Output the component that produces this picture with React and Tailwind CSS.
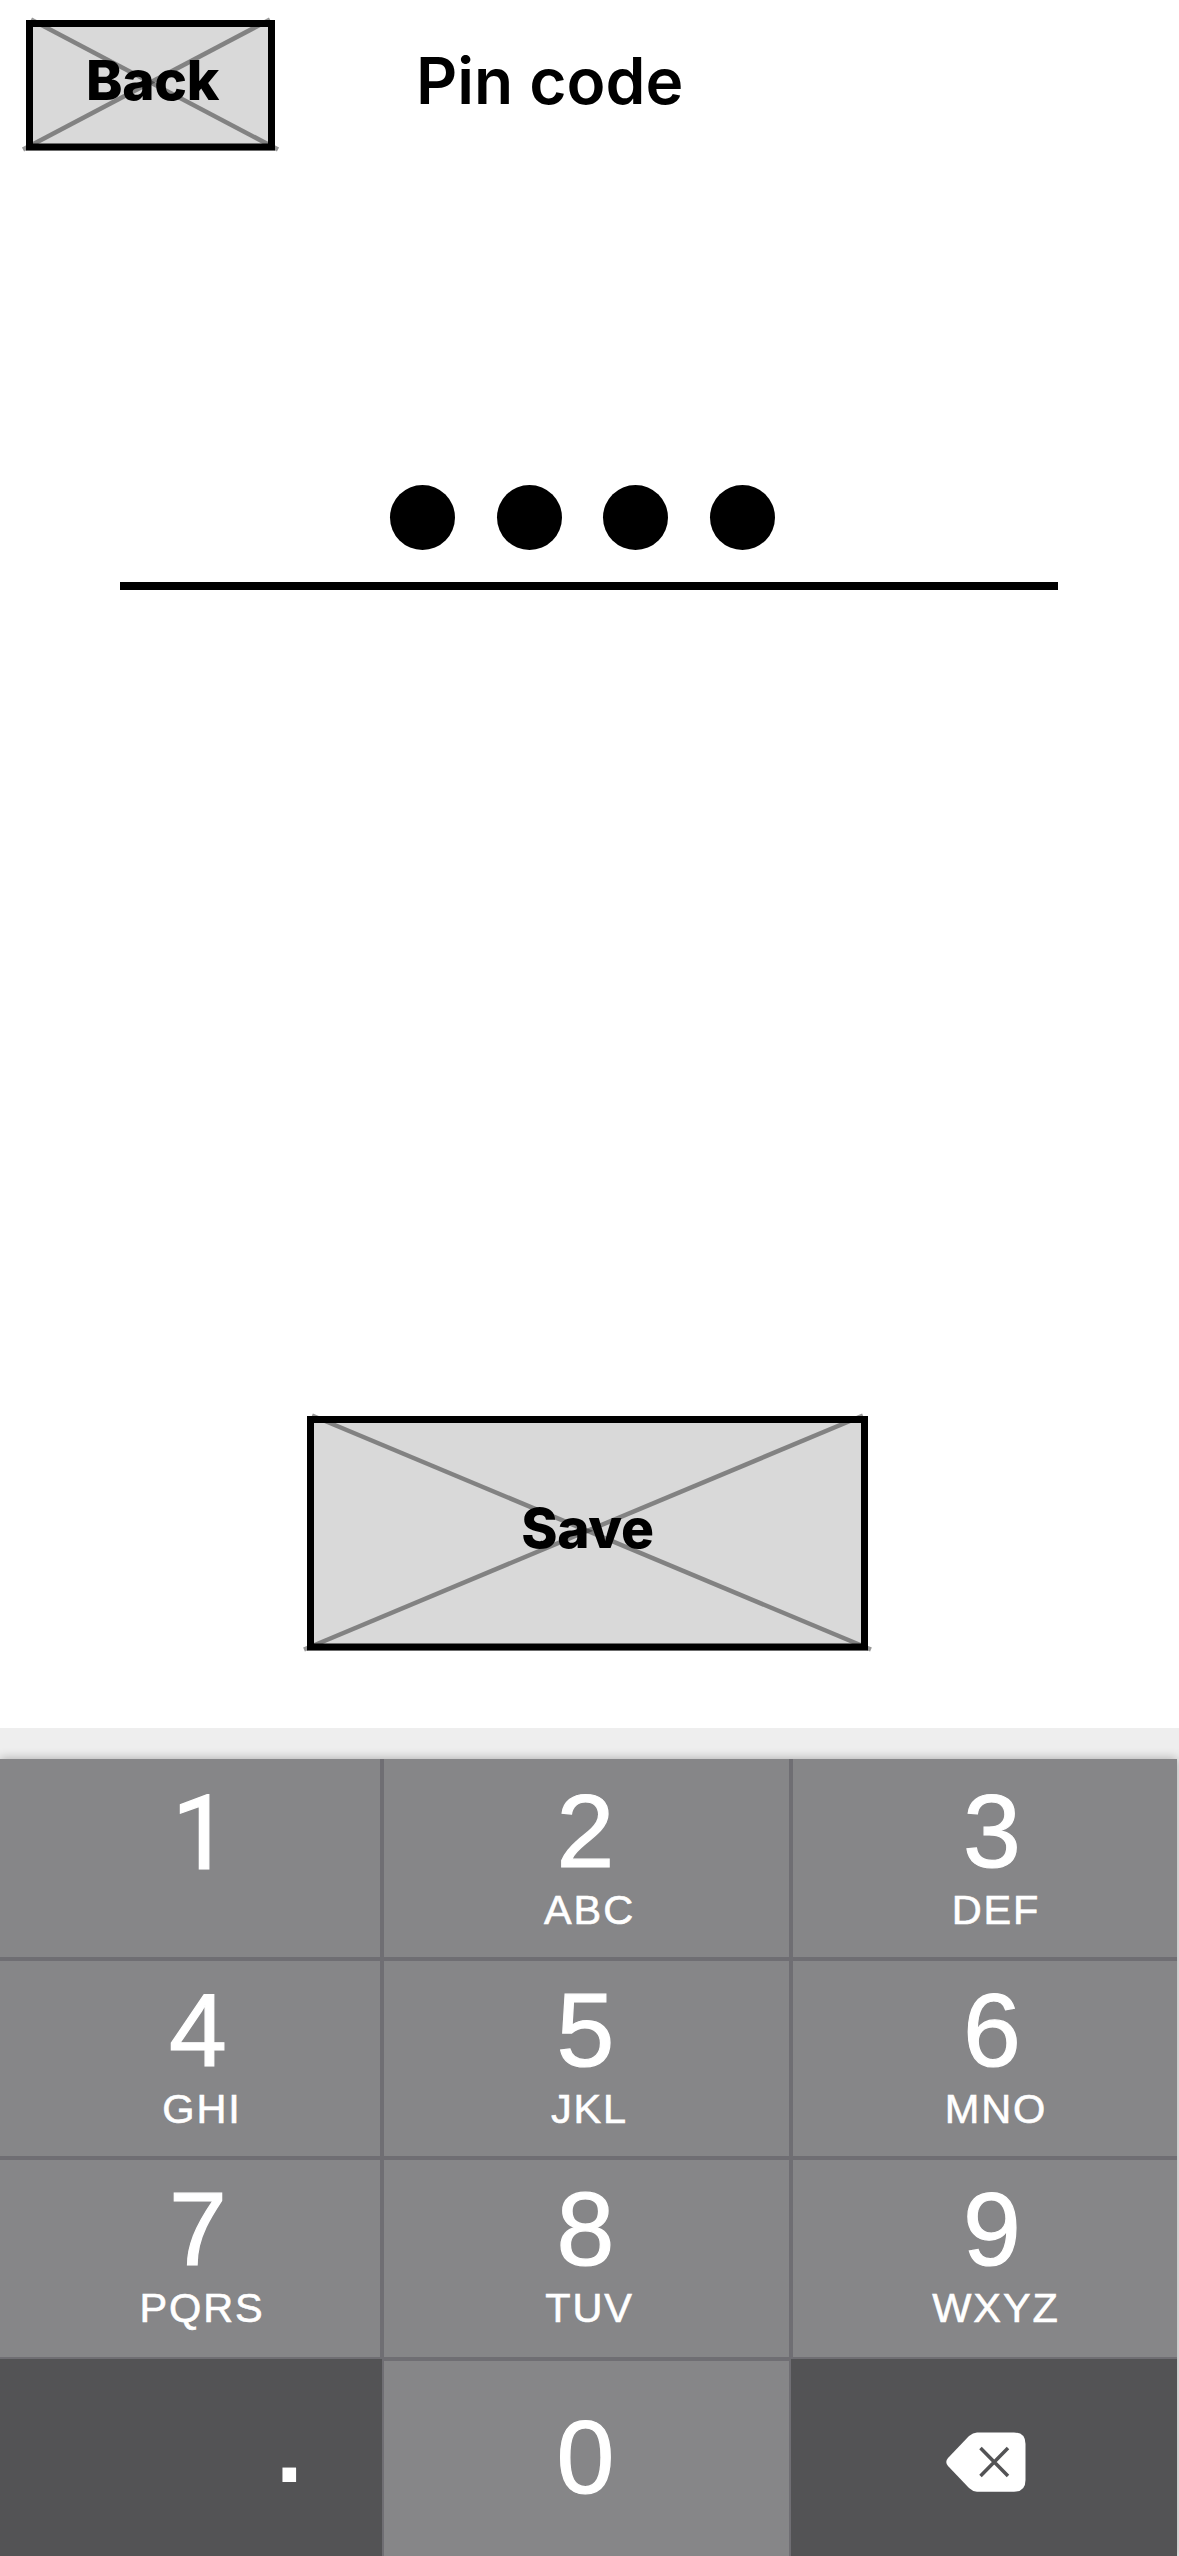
const keys = [
  ['1', ''], ['2', 'ABC'], ['3', 'DEF'],
  ['4', 'GHI'], ['5', 'JKL'], ['6', 'MNO'],
  ['7', 'PQRS'], ['8', 'TUV'], ['9', 'WXYZ'],
];

function CrossBox({ w, h, className, children }) {
  return (
    <button className={`relative flex items-center justify-center bg-[#d9d9d9] ${className}`}>
      <svg className="absolute inset-0 overflow-visible" width={w} height={h} viewBox={`0 0 ${w} ${h}`}>
        <g stroke="#000" strokeOpacity="0.4" strokeWidth="4.5">
          <path d={`M5 -0.5L${w + 3} ${h - 1.5}`} />
          <path d={`M${w - 5} -0.5L-3 ${h - 1.5}`} />
        </g>
        <rect x="3.5" y="3.5" width={w - 7} height={h - 7.5} fill="none" stroke="#000" strokeWidth="7" />
      </svg>
      {children}
    </button>
  );
}

const insets = ['pl-[16px]', 'pr-[2px]', 'pl-[14px]'];

const digitStyle = 'text-[104px] leading-[105px] [-webkit-text-stroke:1.2px_white]';

function Key({ digit, letters, col, row }) {
  return (
    <button className={`flex flex-col items-center border-b-4 border-[#6f6e73] text-white ${col < 2 ? 'border-r-4' : ''} ${insets[col]} ${row === 0 ? 'pt-[20px]' : 'pt-[17px]'}`}>
      <span className={`${digitStyle} ${digit === '1' ? "pl-[6px] pt-[2px] font-['Roboto',sans-serif]" : ''}`}>{digit}</span>
      <span className="mt-[2px] pl-[8px] text-[41.5px] leading-[48px] tracking-[1.9px] [-webkit-text-stroke:0.6px_white]">{letters}</span>
    </button>
  );
}

export default function App() {
  return (
    <main className="flex h-[2556px] w-[1179px] flex-col overflow-hidden bg-white font-['Inter',sans-serif] text-black">
      <header className="flex h-[151px] pl-[26px] pt-[20px]">
        <CrossBox w={249} h={131} className="h-[131px] w-[249px] shrink-0">
          <span className="relative -top-[6px] left-[2px] text-[55px] font-extrabold leading-[66px] tracking-[-0.3px]">Back</span>
        </CrossBox>
        <h1 className="ml-[141px] mt-[22px] text-[64px] font-semibold leading-[78px]">Pin code</h1>
      </header>
      <section className="mx-[120px] mt-[334px] flex h-[105px] w-[938px] gap-[41.6px] border-b-8 border-black pl-[270px]">
        {[0, 1, 2, 3].map((i) => (
          <span key={i} className="size-[65px] shrink-0 rounded-full bg-black" />
        ))}
      </section>
      <CrossBox w={561} h={235} className="ml-[307px] mt-[826px] h-[235px] w-[561px] shrink-0">
        <span className="relative -top-[6px] text-[55px] font-extrabold leading-[66px] tracking-[-0.3px]">Save</span>
      </CrossBox>
      <section className="mt-[77px] flex-1 overflow-hidden bg-[#eeeeee] pt-[31px] font-['Liberation_Sans',sans-serif]">
        <div className="grid h-[797px] w-[1177px] grid-cols-[384px_409px_384px] grid-rows-[202px_199px_201px_195px] bg-[#868688] shadow-[0_0_10px_rgba(0,0,0,0.3)]">
          {keys.map(([digit, letters], i) => (
            <Key key={digit} digit={digit} letters={letters} col={i % 3} row={Math.floor(i / 3)} />
          ))}
          <button className="-mt-[2px] mr-[2px] flex items-start bg-[#535355] pl-[276px] pt-[37px] text-[96px] font-bold leading-[105px] text-white">.</button>
          <button className="-ml-[2px] mr-[2px] flex items-start justify-center border-x-2 border-[#6f6e73] pr-[2px] pt-[44px] text-white">
            <span className={digitStyle}>0</span>
          </button>
          <button className="-ml-[2px] -mt-[2px] flex items-start bg-[#535355] pl-[155px] pt-[73px]">
            <svg width="80" height="60" viewBox="0 0 80 60">
              <path d="M31 0.5H68Q79.5 0.5 79.5 12V48Q79.5 59.7 68 59.7H31Q27 59.7 23 56L2 34Q-1.5 30 2 26L23 4Q27 0.5 31 0.5Z" fill="#fff" />
              <path d="M34.5 16L62 44M62 16L34.5 44" stroke="#535355" strokeWidth="3.5" />
            </svg>
          </button>
        </div>
      </section>
    </main>
  );
}
